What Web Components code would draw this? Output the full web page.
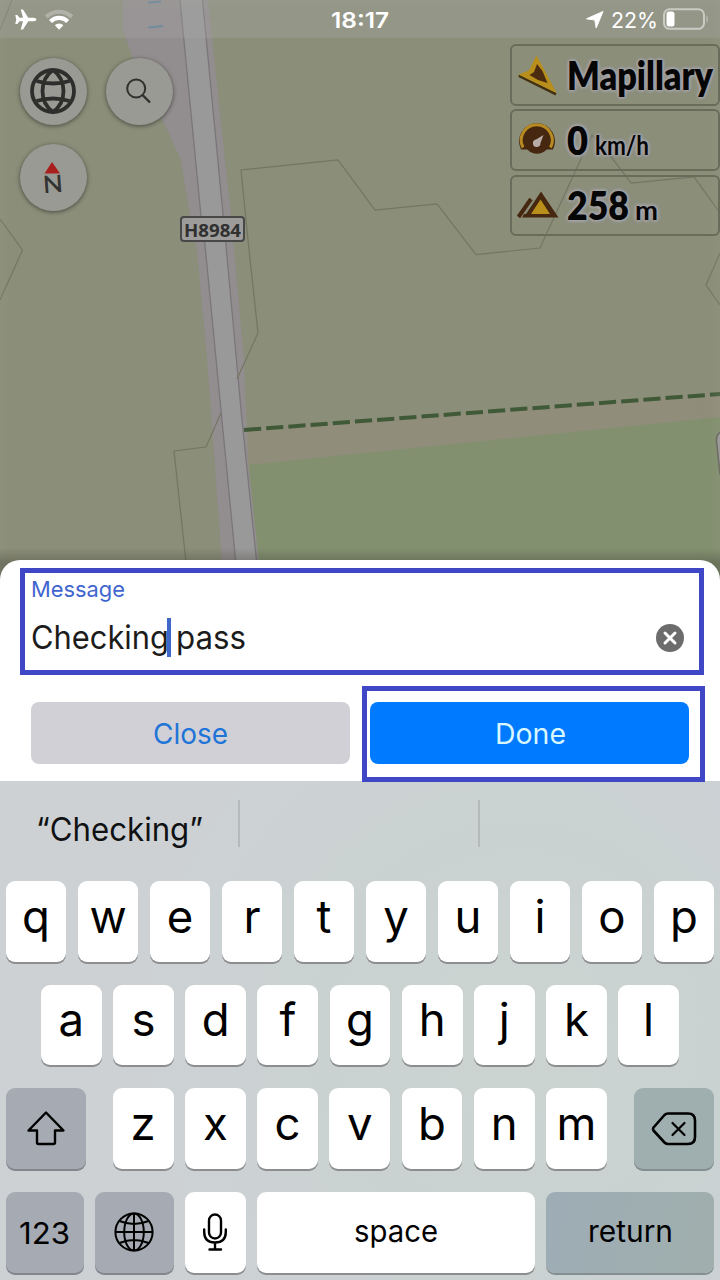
<!DOCTYPE html>
<html lang="en">
<head>
<meta charset="utf-8">
<title>Map message</title>
<style>
html,body{margin:0;padding:0;background:#cdd1d4}
body{width:720px;height:1280px;overflow:hidden;font-family:Inter,"Liberation Sans",sans-serif}
</style>
</head>
<body>
<app-screen></app-screen>
<script>
function define(name, html, setup) {
  customElements.define(name, class extends HTMLElement {
    connectedCallback() {
      if (this.shadowRoot) return;
      const t = document.createElement('template');
      t.innerHTML = html;
      this.attachShadow({mode: 'open'}).append(t.content.cloneNode(true));
      if (setup) setup(this, this.shadowRoot);
    }
  });
}

/* A single line of text, scaled horizontally to the width in its w attribute. */
define('fit-text', `<style>
:host{display:inline-block;white-space:nowrap}
span{display:inline-block;transform-origin:0 50%}
</style><span><slot></slot></span>`, (el, root) => {
  const s = root.querySelector('span'), w = +el.getAttribute('w');
  const natural = s.getBoundingClientRect().width;
  if (natural) s.style.transform = 'scaleX(' + w / natural + ')';
  el.style.width = w + 'px';
});

define('status-bar', `<style>
:host{display:flex;height:38px;align-items:center;background:rgba(170,170,170,.3);color:#fff;font-size:22px;line-height:38px;box-sizing:border-box;padding-top:1px}
.side{width:331px;height:38px}
.time{font-weight:600}
.right{margin-left:auto;display:flex;align-items:center}
svg{display:block;margin-top:-1px}
</style>
<div class="side"><svg width="80" height="38"><path fill="#fff" d="M36.5 19.5c0 1.200-2 1.800-4 1.800h-4.200L23 29.500h-2.300l2.300-8.200h-3.500l-2.200 2.700h-2l.9-4.500-.9-4.500h2l2.200 2.700h3.500l-2.300-8.200H23l5.300 8.200h4.200c2 0 4 .6 4 1.800z"/>
<path fill="none" stroke="#c9c9c5" stroke-opacity=".55" stroke-width="4" d="M46.300 17a18 18 0 0 1 25.600 0"/><path fill="none" stroke="#fff" stroke-width="4.200" d="M50.500 21.500a12 12 0 0 1 17.200 0"/><path fill="#fff" d="M59.100 29.800l-4.300-4.500a6 6 0 0 1 8.600 0z"/></svg></div>
<fit-text class="time" w="58">18:17</fit-text>
<div class="right"><svg width="27" height="38"><path fill="#fff" stroke="#fff" stroke-width="1" stroke-linejoin="round" d="M19 11.500L2.500 18.800l8.300 1.200 1.400 8z"/></svg>
<fit-text w="47">22%</fit-text>
<svg width="62" height="38"><rect x="6" y="9.300" width="40" height="19.500" rx="5.500" fill="none" stroke="#fff" stroke-opacity=".5" stroke-width="2"/><rect x="8.500" y="11.500" width="8" height="15" rx="2.500" fill="#fff"/><path fill="#fff" fill-opacity=".45" d="M48.500 15q2.700 4 0 8z"/></svg></div>`);

define('round-button', `<style>
:host{display:grid;place-items:center;width:67px;height:67px;border-radius:50%;background:#9a9a94;box-shadow:0 1px 4px rgba(50,50,45,.75)}
</style><slot></slot>`);

define('hud-widget', `<style>
:host{display:flex;box-sizing:border-box;width:210px;height:61.500px;border:2px solid #696c5b;border-radius:6px;align-items:center;color:#060606;font:800 39px/58px Lato,"Open Sans",sans-serif;text-shadow:0 0 2px #a6a5ab,0 0 3px #a6a5ab,0 0 4px #a6a5ab,0 0 4px #a6a5ab,0 0 5px #a6a5ab}
.icon{width:55px;height:58px}
.line{display:flex;align-items:baseline;height:58px}
::slotted(.unit){font-size:26px;font-weight:700}
</style><div class="icon"><slot name="icon"></slot></div><div class="line"><slot></slot></div>`);

define('map-scene', `<style>
:host{display:block;position:relative;height:590px;overflow:hidden;background:#8b8e79}
.map{position:absolute;inset:0}
.edge{position:absolute;inset:0;box-shadow:inset 0 0 18px rgba(165,165,145,.32)}
.shade{position:absolute;left:0;right:0;top:548px;height:42px;background:linear-gradient(rgba(60,60,50,0),rgba(60,60,50,.35) 35%)}
status-bar{position:relative}
.controls{position:relative;display:flex;justify-content:space-between;align-items:flex-start}
.buttons{display:grid;grid-template-columns:67px 67px;gap:19px;padding:19.500px 0 0 19.500px}
.hud{display:grid;gap:3.800px;padding-top:6px}
.tag{position:absolute;left:180px;top:216px;box-sizing:border-box;width:65px;height:26px;border:2px solid #484848;border-radius:4px;background:#9d9c9b;color:#303030;font:700 18px/24px "Noto Sans","Open Sans",sans-serif;padding-left:2px}
.controls text{font:600 24px Lato,sans-serif}
</style>
<svg class="map" width="720" height="590" fill="none">
<path fill="#908d7b" d="M244 430L720 394V420L247 466z"/>
<path fill="#82906f" d="M246 465L720 417V590H258z"/>
<path fill="#928d8f" d="M123 0V30L137 70 165 125 181 160 190 216 197 250 208 370 224 590H262L248 460 244 360 231 216 208 0z"/>
<path fill="#9a999a" stroke="#7a767a" stroke-width="1.300" d="M179.500-5L201 216 204.500 240 220 400 239 595H260L241.500 415 225.500 240 202-5z"/>
<g stroke="#737663" stroke-width="1.200"><path d="M237 379L258 333 248 240 241 170 338 160 375 210 437 204 476 254.500 540 248 592 135 612 158 631 183 694 177 720 213M720 253L706 285 720 305M221 413L206 447 174 451 189 590M0 219L22.500 250 0 300M12 0L0 30"/></g>
<path stroke="#405a38" stroke-width="4" stroke-dasharray="17.200 5.050" d="M244 430L720 394"/>
<path stroke="#597f9b" stroke-width="2" d="M148 2.500L161 1.500M148.500 27.500L163 26"/>
<path fill="#9c9b9b" stroke="#66665f" stroke-width="1.600" d="M722 432Q716 433 716.500 441L720 474 722 476z"/>
</svg>
<div class="edge"></div><div class="shade"></div>
<span class="tag"><fit-text w="57">H8984</fit-text></span>
<status-bar></status-bar>
<div class="controls">
<div class="buttons">
<round-button><svg width="48" height="48" fill="none" stroke="#2e2e2d" stroke-width="3.800"><circle cx="24" cy="24" r="21"/><path d="M24 3C10 13 10 35 24 45C38 35 38 13 24 3M7.500 14Q24 19 40.500 14M7.500 34Q24 29 40.500 34"/></svg></round-button>
<round-button><svg width="34" height="34" fill="none" stroke="#30302f" stroke-width="2"><circle cx="14.200" cy="14.500" r="9"/><path stroke-width="2.400" d="M20.500 21L28 28.500"/></svg></round-button>
<round-button><svg width="34" height="44"><path fill="#a91f1e" d="M16 7L24 18.500H8.500z"/><text x="7" y="37.500" fill="#333" textLength="20" lengthAdjust="spacingAndGlyphs" transform="rotate(-4 17 30)">N</text></svg></round-button>
</div>
<div class="hud">
<hud-widget><svg slot="icon" width="55" height="58"><path fill="#43310f" d="M7 28.500L44.500 47 43.500 49.500 6.500 31z"/><path fill="#b88f1b" d="M24.500 9.500L34 27 44.500 47 6.500 28.500 17 24.500z"/><path fill="#4c2c10" d="M25 18L30.500 25 35.500 37 26 34 17.500 29 22 26z"/></svg><fit-text w="146">Mapillary</fit-text></hud-widget>
<hud-widget><svg slot="icon" width="55" height="58"><path fill="#46270f" d="M9 38.500A18 18 0 1 1 41 38.500H34A13.500 13.500 0 0 1 16 38.500z"/><path fill="none" stroke="#b88b22" stroke-width="3" d="M11 36.500A15.500 15.500 0 1 1 38.500 36.500"/><circle cx="25" cy="30" r="12.800" fill="#46270f"/><path fill="#b9aca7" d="M31.500 24L28.500 32a3.800 3.800 0 1 1-4.500-3.500z"/></svg><fit-text w="21">0</fit-text><fit-text class="unit" w="54" style="margin-left:7px">km/h</fit-text></hud-widget>
<hud-widget><svg slot="icon" width="55" height="58"><path stroke="#46270f" stroke-width="4" d="M6.500 41L19 23"/><path fill="#46270f" d="M29 15.500L46.500 41.500H10L12 38H14z"/><path fill="#b88f1b" d="M28.500 23.500L38 38H19z"/></svg><fit-text w="62">258</fit-text><fit-text class="unit" w="23" style="margin-left:6px">m</fit-text></hud-widget>
</div></div>`);

define('message-field', `<style>
:host{display:block;box-sizing:border-box;height:107px;border:5px solid #4047c6;padding:4px 15px 0 6px;margin:0 16px 0 20px}
.label{display:block;color:#3f65cf;font-size:22px;line-height:24px;height:24px}
.row{display:flex;align-items:center;justify-content:space-between;height:60px;margin-top:7px}
.value{display:flex;align-items:center;color:#1c1c1c;font-size:32.500px;line-height:62px}
.caret{width:4px;height:39px;background:#3f68c9;margin:-2px 0 0 -2px}
</style>
<fit-text class="label" w="94">Message</fit-text>
<div class="row"><div class="value"><fit-text w="138">Checking</fit-text><i class="caret"></i><fit-text w="70" style="margin-left:5px">pass</fit-text></div>
<svg width="28" height="28"><circle cx="14" cy="14" r="14" fill="#6c6c6c"/><path stroke="#fff" stroke-width="3" stroke-linecap="round" d="M9 9L19 19M19 9L9 19"/></svg></div>`);

define('action-button', `<style>
:host{display:block;box-sizing:border-box;width:319px;height:62px;border-radius:8px;background:#d1d0d7;color:#2074d8;font-size:28px;line-height:65px;text-align:center}
:host([primary]){background:#007aff;color:#d8f7ff}
</style><slot></slot>`);

define('message-sheet', `<style>
:host{display:block;position:relative;z-index:1;box-sizing:border-box;height:221px;margin-top:-30px;padding-top:8px;background:#fff;border-radius:20px 20px 0 0}
.actions{display:flex;gap:12px;padding:11px 0 0 31px}
.frame{box-sizing:border-box;width:343px;height:96px;border:5px solid #4047c6;padding:11px 3px}
</style>
<message-field></message-field>
<div class="actions"><action-button style="margin-top:16px"><fit-text w="75">Close</fit-text></action-button>
<div class="frame"><action-button primary><fit-text w="71">Done</fit-text></action-button></div></div>`);

define('key-cap', `<style>
:host{display:flex;box-sizing:border-box;height:80.500px;align-items:center;justify-content:center;border-radius:9px;background:#fff;color:#000;box-shadow:0 2px 0 #8b8d8f;font-size:45.500px;font-weight:400;line-height:70px;padding-bottom:9px}
:host([small]){font-size:30px;font-weight:400;padding-bottom:3px}
:host([icon]){padding-bottom:0}
:host([tone=gray]){background:#a5aab3;box-shadow:0 2px 0 #83868c}
:host([tone=teal]){background:#9fafaf;box-shadow:0 2px 0 #838e90}
:host([tone=mix]){background:linear-gradient(100deg,#9eacb6,#9faeb0 60%,#a0aeac);box-shadow:0 2px 0 #838e90}
:host([digits]){padding:2px 0 0}
</style><slot></slot>`);

define('suggestion-bar', `<style>
:host{display:grid;grid-template-columns:240px 240px 240px;height:100px;box-sizing:border-box;padding-top:19px;color:#101112;font-size:32px;line-height:60px}
div{height:47px;box-sizing:border-box;border-right:2px solid #b4b9bb}
div:last-child{border:0}
fit-text{margin-left:36px}
</style><div><fit-text w="167">“Checking”</fit-text></div><div></div><div></div>`);

define('touch-keyboard', `<style>
:host{display:block;height:499px;background:radial-gradient(circle at 520px 250px,#cbd4d1 0,#cad2d1 200px,rgba(203,209,209,0) 380px),linear-gradient(100deg,#cdd1d4,#cdd1d4 60%,#cbd0d6)}
.row{display:grid;height:80.500px;margin-bottom:23.200px}
.one{grid-template-columns:repeat(10,60px);gap:12px;padding-left:6px}
.two{grid-template-columns:repeat(9,60.800px);gap:11.350px;padding-left:41px}
.three{grid-template-columns:80px 4px repeat(7,60.800px) 4.800px 80px;column-gap:11.400px;padding-left:6px}
.four{grid-template-columns:77.500px 79px 61px 278px 168px;column-gap:11.200px;padding-left:6px}
</style>
<suggestion-bar></suggestion-bar>
<div class="row one"></div><div class="row two"></div>
<div class="row three"><key-cap icon tone="gray"><svg width="42" height="40" fill="none" stroke="#000" stroke-width="2.400" stroke-linejoin="round"><path d="M21 3.500L38.500 21.500H30V33.500Q30 35 28.500 35H13.500Q12 35 12 33.500V21.500H3.500z"/></svg></key-cap><i></i><i class="end"></i><key-cap icon tone="teal"><svg width="48" height="40" fill="none" stroke="#000" stroke-width="2.600" stroke-linejoin="round" stroke-linecap="round"><path d="M18 4.500H38Q45 4.500 45 11.500V28Q45 35 38 35H18Q16 35 14.500 33.500L3.500 21.500Q2.500 20 3.500 18.500L14.500 6Q16 4.500 18 4.500z"/><path stroke-width="2.200" d="M22.500 14L34.500 26M34.500 14L22.500 26"/></svg></key-cap></div>
<div class="row four"><key-cap small digits tone="gray"><fit-text w="51">123</fit-text></key-cap>
<key-cap icon tone="gray"><svg width="42" height="42" fill="none" stroke="#000" stroke-width="2"><circle cx="21" cy="21" r="18.600"/><ellipse cx="21" cy="21" rx="9.800" ry="18.600"/><path d="M21 2.400V39.600M2.400 21H39.600M6.500 10Q21 16 35.500 10M6.500 32Q21 26 35.500 32"/></svg></key-cap>
<key-cap icon><svg width="26" height="42" fill="none" stroke="#000" stroke-width="2.400" stroke-linecap="round"><rect x="7" y="3.500" width="12" height="24" rx="6"/><path d="M2.200 18.500V21Q2.200 31.500 13 31.500T23.800 21V18.500M13 31.500V38M7.500 38.500H19"/></svg></key-cap>
<key-cap small><fit-text w="84">space</fit-text></key-cap>
<key-cap small tone="mix"><fit-text w="85">return</fit-text></key-cap></div>`, (el, root) => {
  const caps = s => [...s].map(c => { const k = document.createElement('key-cap'); k.textContent = c; return k; });
  root.querySelector('.one').append(...caps('qwertyuiop'));
  root.querySelector('.two').append(...caps('asdfghjkl'));
  root.querySelector('.end').before(...caps('zxcvbnm'));
});

define('app-screen', `<style>
:host{display:flex;flex-direction:column;width:720px;height:1280px;overflow:hidden}
map-scene,message-sheet,touch-keyboard{flex:none}
</style><map-scene></map-scene><message-sheet></message-sheet><touch-keyboard></touch-keyboard>`);
</script>
</body>
</html>
